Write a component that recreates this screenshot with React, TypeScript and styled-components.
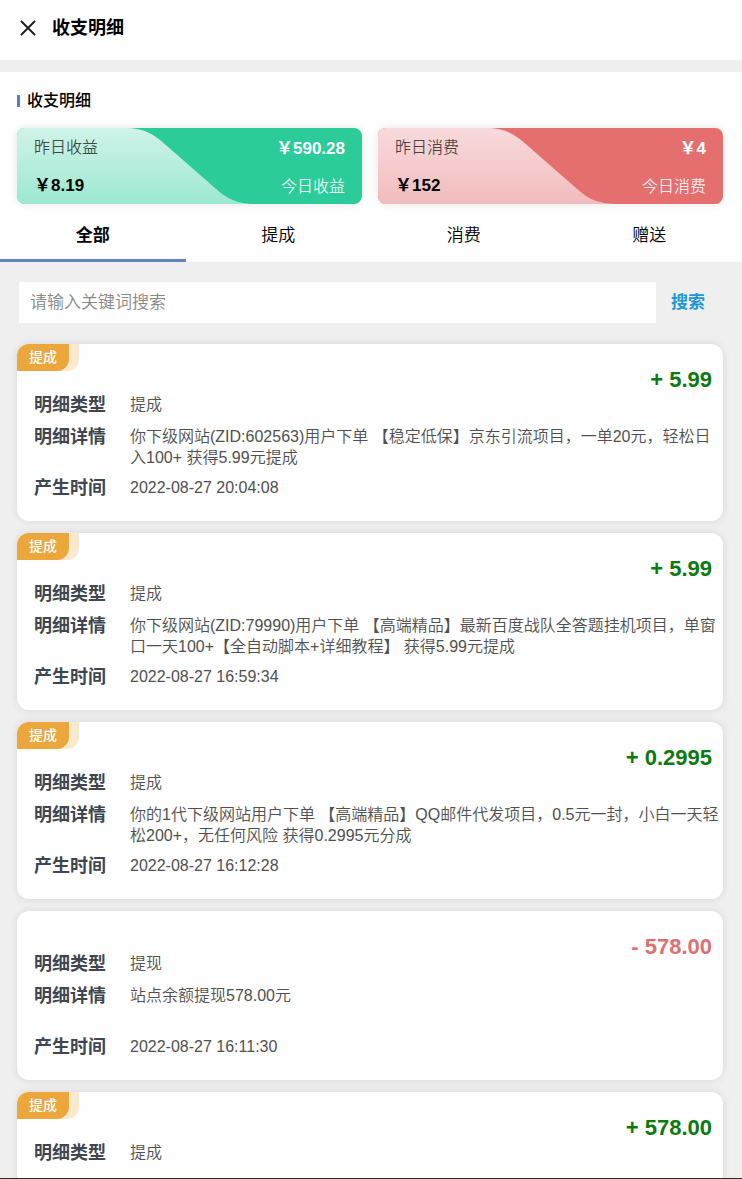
import React from "react";
import styled, { createGlobalStyle } from "styled-components";

const GlobalStyle = createGlobalStyle`
  *, *::before, *::after { box-sizing: border-box; }
  body {
    margin: 0;
    background: #efefef;
    color: #000;
    font-family: "Liberation Sans", "Noto Sans CJK SC", sans-serif;
    font-size: 16px;
  }
  h1, h2, p, dl, dd, ul { margin: 0; padding: 0; }
  button, input { font-family: inherit; border: 0; padding: 0; background: none; }
  button { cursor: pointer; }
`;

const Shell = styled.div`
  height: 100vh;
  display: flex;
  flex-direction: column;
  overflow: hidden;
  border-bottom: 1px solid #2b2928;
`;

const TopBar = styled.header`
  flex: none;
  display: flex;
  align-items: center;
  gap: 16px;
  height: 60px;
  padding: 0 20px 4px;
  background: #fefefe;
`;

const CloseButton = styled.button`
  display: flex;
  color: #222;
`;

const PageTitle = styled.h1`
  font-size: 18px;
  line-height: 24px;
  font-weight: 700;
`;

const Overview = styled.section`
  flex: none;
  margin-top: 12px;
  background: #fefefe;
`;

const SectionTitle = styled.h2`
  display: flex;
  align-items: center;
  gap: 7px;
  padding: 17px 17px 15px;
  font-size: 16px;
  line-height: 24px;
  font-weight: 500;

  &::before {
    content: "";
    width: 3px;
    height: 12px;
    background: #5b7fc0;
  }
`;

const Summaries = styled.div`
  display: grid;
  grid-template-columns: 1fr 1fr;
  gap: 16px;
  padding: 0 19px 0 17px;
`;

const SummaryCard = styled.div<{ $color: string }>`
  position: relative;
  display: flex;
  justify-content: space-between;
  height: 76px;
  padding: 9px 17px 6px;
  overflow: hidden;
  border-radius: 8px;
  background: ${(p) => p.$color};
  box-shadow: 0 0 8px rgba(0, 0, 0, 0.1);
`;

const Wave = styled.svg`
  position: absolute;
  inset: 0;
  width: 100%;
  height: 100%;
`;

const Figure = styled.div<{ $today?: boolean }>`
  position: relative;
  display: flex;
  flex-direction: ${(p) => (p.$today ? "column-reverse" : "column")};
  align-items: ${(p) => (p.$today ? "flex-end" : "flex-start")};
  justify-content: space-between;
  color: ${(p) => (p.$today ? "#fff" : "#000")};
`;

const FigureLabel = styled.span<{ $today?: boolean }>`
  font-size: 16px;
  line-height: 22px;
  font-weight: 350;
  color: ${(p) => (p.$today ? "rgba(255, 255, 255, 0.9)" : "rgba(0, 0, 0, 0.7)")};
`;

const FigureValue = styled.strong`
  font-size: 17px;
  line-height: 24px;
`;

const Tabs = styled.nav`
  display: flex;
  height: 58px;
`;

const Tab = styled.button<{ $active?: boolean }>`
  flex: 1;
  padding-top: 9px;
  border-bottom: 3px solid ${(p) => (p.$active ? "#5f84bd" : "transparent")};
  color: #000;
  font-size: 17px;
  line-height: 24px;
  font-weight: ${(p) => (p.$active ? 700 : 350)};
`;

const SearchBar = styled.form`
  flex: none;
  display: flex;
  align-items: center;
  gap: 15px;
  padding: 20px 37px 21px 19px;
`;

const SearchInput = styled.input`
  flex: 1;
  min-width: 0;
  height: 41px;
  padding: 0 11px;
  background: #fefefe;
  font-size: 17px;
  font-weight: 350;

  &::placeholder { color: #888; }
`;

const SearchButton = styled.button`
  color: #2196d8;
  font-size: 17px;
  line-height: 24px;
  font-weight: 700;
`;

const Records = styled.ul`
  flex: none;
  display: flex;
  flex-direction: column;
  gap: 12px;
  padding: 0 19px 0 17px;
  list-style: none;
`;

const RecordCard = styled.li`
  min-height: 169px;
  padding-bottom: 21px;
  border-radius: 12px;
  background: #fefefe;
  box-shadow: 0 0 8px rgba(0, 0, 0, 0.1);
`;

const RecordHead = styled.div<{ $tagged: boolean }>`
  display: flex;
  align-items: flex-start;
  height: ${(p) => (p.$tagged ? 49 : 41)}px;
  padding-right: 11px;
`;

const Tag = styled.span`
  width: 62px;
  height: 27px;
  border-radius: 12px 0 12px 0;
  background: #fbe9cd;
`;

const TagLabel = styled.span`
  display: block;
  width: 52px;
  border-radius: 12px 0 12px 0;
  background: #eba63c;
  color: #fff;
  font-size: 14px;
  line-height: 27px;
  font-weight: 500;
  text-align: center;
`;

const Amount = styled.strong<{ $negative: boolean }>`
  margin-left: auto;
  padding-top: 24px;
  color: ${(p) => (p.$negative ? "#dd7074" : "#0b7a10")};
  font-size: 22px;
  line-height: 24px;
`;

const Details = styled.dl`
  display: grid;
  gap: 8px;
  padding-left: 17px;
`;

const DetailRow = styled.div<{ $tall?: boolean }>`
  display: grid;
  grid-template-columns: 96px 1fr;
  min-height: ${(p) => (p.$tall ? 43 : 24)}px;
`;

const Term = styled.dt`
  color: #40464f;
  font-size: 18px;
  line-height: 24px;
  font-weight: 700;
`;

const Value = styled.dd`
  padding-top: 1px;
  color: #505050;
  font-size: 16px;
  line-height: 21px;
  font-weight: 350;
`;

interface Entry {
  amount: string;
  type: string;
  tag?: string;
  detail?: string;
  time?: string;
}

const entries: Entry[] = [
  {
    tag: "提成",
    amount: "+ 5.99",
    type: "提成",
    detail: "你下级网站(ZID:602563)用户下单 【稳定低保】京东引流项目，一单20元，轻松日入100+ 获得5.99元提成",
    time: "2022-08-27 20:04:08",
  },
  {
    tag: "提成",
    amount: "+ 5.99",
    type: "提成",
    detail: "你下级网站(ZID:79990)用户下单 【高端精品】最新百度战队全答题挂机项目，单窗口一天100+【全自动脚本+详细教程】 获得5.99元提成",
    time: "2022-08-27 16:59:34",
  },
  {
    tag: "提成",
    amount: "+ 0.2995",
    type: "提成",
    detail: "你的1代下级网站用户下单 【高端精品】QQ邮件代发项目，0.5元一封，小白一天轻松200+，无任何风险 获得0.2995元分成",
    time: "2022-08-27 16:12:28",
  },
  {
    amount: "- 578.00",
    type: "提现",
    detail: "站点余额提现578.00元",
    time: "2022-08-27 16:11:30",
  },
  { tag: "提成", amount: "+ 578.00", type: "提成" },
];

interface SummaryProps {
  id: string;
  color: string;
  from: string;
  to: string;
  name: string;
  yesterday: string;
  today: string;
}

function Summary({ id, color, from, to, name, yesterday, today }: SummaryProps) {
  return (
    <SummaryCard $color={color}>
      <Wave viewBox="0 0 345 76" preserveAspectRatio="none" aria-hidden="true">
        <defs>
          <linearGradient id={id} x1="0" y1="0" x2="0" y2="1">
            <stop offset="0" stopColor={from} />
            <stop offset="1" stopColor={to} />
          </linearGradient>
        </defs>
        <path d="M0 0H108C128 0 138 7 150 18L198 60C210 71 220 76 240 76H0Z" fill={`url(#${id})`} />
      </Wave>
      <Figure>
        <FigureLabel>昨日{name}</FigureLabel>
        <FigureValue>￥{yesterday}</FigureValue>
      </Figure>
      <Figure $today>
        <FigureLabel $today>今日{name}</FigureLabel>
        <FigureValue>￥{today}</FigureValue>
      </Figure>
    </SummaryCard>
  );
}

function Record({ entry }: { entry: Entry }) {
  return (
    <RecordCard>
      <RecordHead $tagged={Boolean(entry.tag)}>
        {entry.tag && (
          <Tag>
            <TagLabel>{entry.tag}</TagLabel>
          </Tag>
        )}
        <Amount $negative={entry.amount.startsWith("-")}>{entry.amount}</Amount>
      </RecordHead>
      <Details>
        <DetailRow>
          <Term>明细类型</Term>
          <Value>{entry.type}</Value>
        </DetailRow>
        {entry.detail && (
          <DetailRow $tall>
            <Term>明细详情</Term>
            <Value>{entry.detail}</Value>
          </DetailRow>
        )}
        {entry.time && (
          <DetailRow>
            <Term>产生时间</Term>
            <Value>{entry.time}</Value>
          </DetailRow>
        )}
      </Details>
    </RecordCard>
  );
}

export default function App() {
  return (
    <>
      <GlobalStyle />
      <Shell>
        <TopBar>
          <CloseButton type="button" aria-label="关闭">
            <svg width="16" height="16" viewBox="0 0 16 16" fill="none" stroke="currentColor" strokeWidth="2">
              <path d="M1 1L15 15M15 1L1 15" />
            </svg>
          </CloseButton>
          <PageTitle>收支明细</PageTitle>
        </TopBar>
        <Overview>
          <SectionTitle>收支明细</SectionTitle>
          <Summaries>
            <Summary id="income" color="#2bcb9a" from="#d0f3e8" to="#9ce8d0" name="收益" yesterday="8.19" today="590.28" />
            <Summary id="spend" color="#e56e6e" from="#f8dadc" to="#f2bcbd" name="消费" yesterday="152" today="4" />
          </Summaries>
          <Tabs>
            <Tab type="button" $active>全部</Tab>
            <Tab type="button">提成</Tab>
            <Tab type="button">消费</Tab>
            <Tab type="button">赠送</Tab>
          </Tabs>
        </Overview>
        <SearchBar onSubmit={(e) => e.preventDefault()}>
          <SearchInput type="text" placeholder="请输入关键词搜索" aria-label="关键词" />
          <SearchButton type="submit">搜索</SearchButton>
        </SearchBar>
        <Records>
          {entries.map((entry, i) => (
            <Record key={i} entry={entry} />
          ))}
        </Records>
      </Shell>
    </>
  );
}
